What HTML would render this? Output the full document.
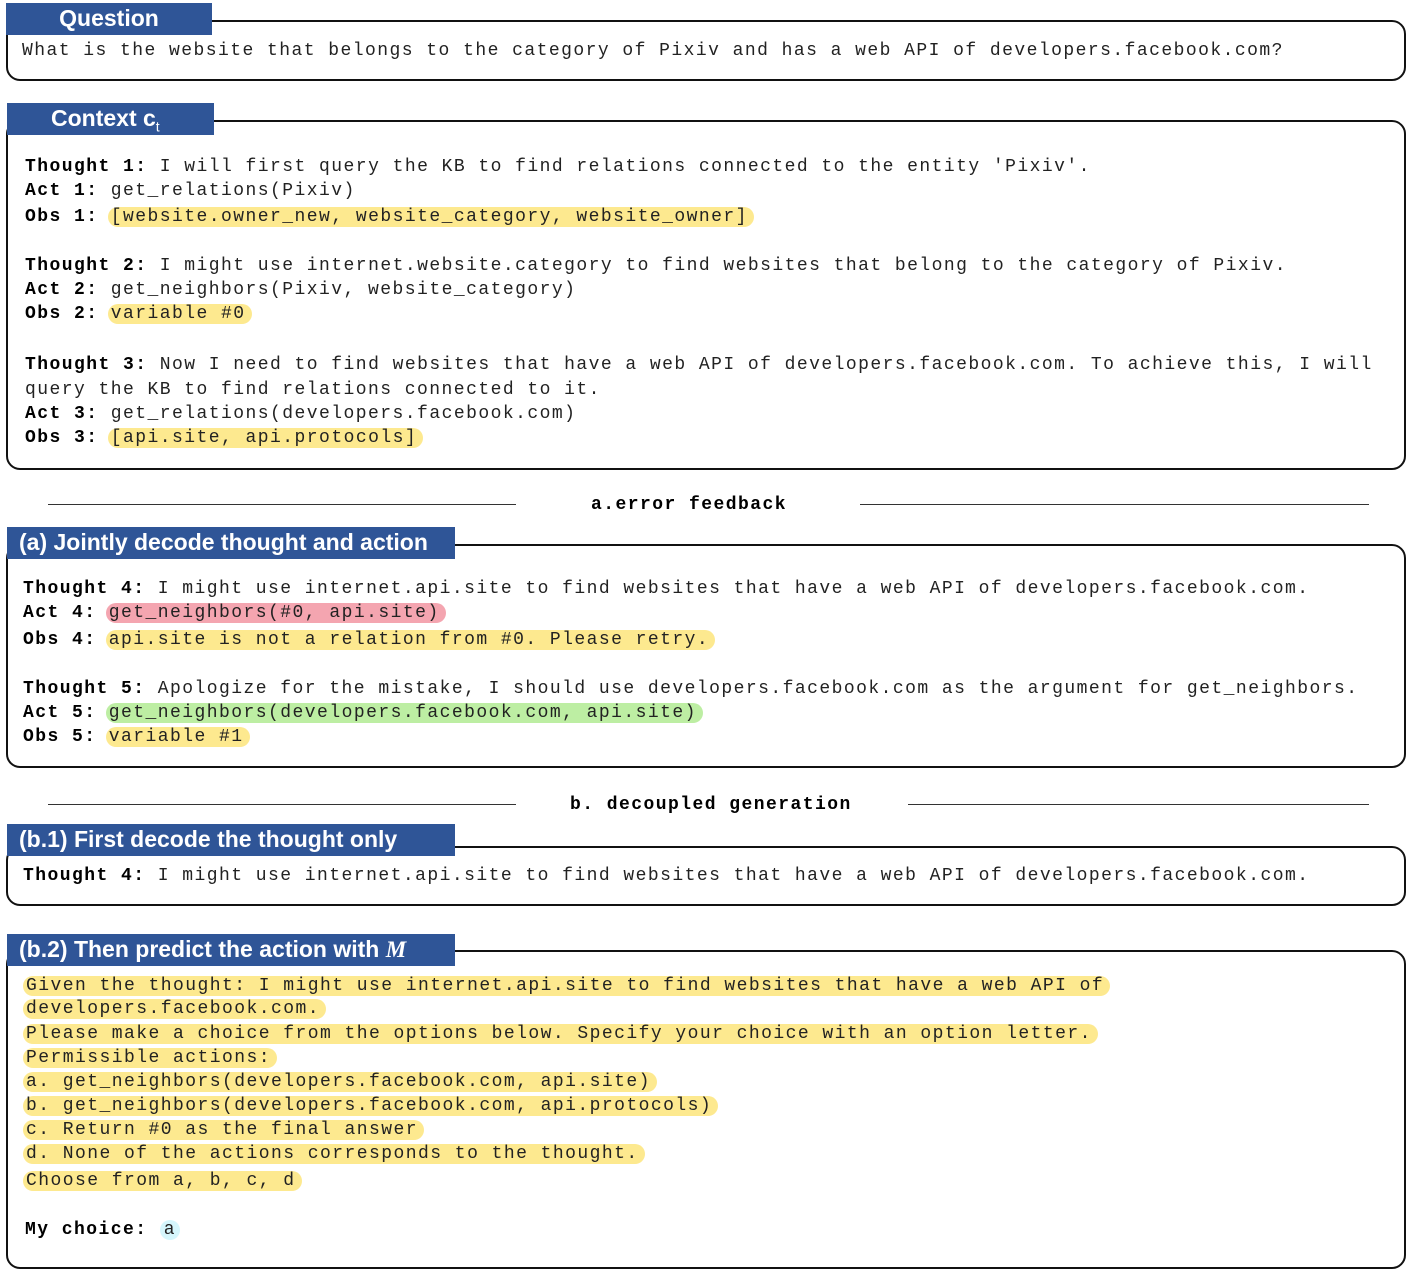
<!DOCTYPE html>
<html><head><meta charset="utf-8"><style>
body{margin:0;width:1411px;height:1274px;background:#fff;position:relative;overflow:hidden;font-family:"Liberation Mono",monospace}
.box{position:absolute;border:2px solid #111;border-radius:14px;box-sizing:border-box}
.hd{position:absolute;background:#2f5597;color:#fff;font:bold 23px "Liberation Sans",sans-serif;line-height:30px;height:32px;box-sizing:border-box;white-space:nowrap}
.l{position:absolute;white-space:pre;font-size:18px;letter-spacing:1.45px;line-height:22px;color:#222;margin-top:1px}
b{color:#000}
.y{background:#fde98f;border-radius:10px;padding:0 6px 0 3px;margin-left:-3px}
.r{background:#f4a5b0;border-radius:10px;padding:0 6px 0 3px;margin-left:-3px}
.g{background:#bdeea3;border-radius:10px;padding:0 6px 0 3px;margin-left:-3px}
.c{background:#d5f6fc;border-radius:10px;padding:0 4px}
.rule{position:absolute;height:2px;background:#333}
</style></head><body>

<div class="box" style="left:6px;top:20px;width:1400px;height:61px"></div>
<div class="hd" style="left:6px;top:3px;width:206px;text-align:center">Question</div>
<div class="l" style="left:22px;top:39px">What is the website that belongs to the category of Pixiv and has a web API of developers.facebook.com?</div>

<div class="box" style="left:6px;top:120px;width:1400px;height:350px"></div>
<div class="hd" style="left:7px;top:103px;width:207px;padding-left:44px">Context <span style="font-size:23px">c<sub style="font-size:14px;font-weight:normal">t</sub></span></div>
<div class="l" style="left:25px;top:155px"><b>Thought 1:</b> I will first query the KB to find relations connected to the entity 'Pixiv'.</div>
<div class="l" style="left:25px;top:179px"><b>Act 1:</b> get_relations(Pixiv)</div>
<div class="l" style="left:25px;top:205px"><b>Obs 1:</b> <span class="y">[website.owner_new, website_category, website_owner]</span></div>
<div class="l" style="left:25px;top:254px"><b>Thought 2:</b> I might use internet.website.category to find websites that belong to the category of Pixiv.</div>
<div class="l" style="left:25px;top:278px"><b>Act 2:</b> get_neighbors(Pixiv, website_category)</div>
<div class="l" style="left:25px;top:302px"><b>Obs 2:</b> <span class="y">variable #0</span></div>
<div class="l" style="left:25px;top:353px"><b>Thought 3:</b> Now I need to find websites that have a web API of developers.facebook.com. To achieve this, I will</div>
<div class="l" style="left:25px;top:378px">query the KB to find relations connected to it.</div>
<div class="l" style="left:25px;top:402px"><b>Act 3:</b> get_relations(developers.facebook.com)</div>
<div class="l" style="left:25px;top:426px"><b>Obs 3:</b> <span class="y">[api.site, api.protocols]</span></div>

<div class="rule" style="left:48px;top:504px;width:468px;height:1px"></div>
<div class="rule" style="left:860px;top:504px;width:509px;height:1px"></div>
<div class="l" style="left:591px;top:493px"><b>a.error feedback</b></div>

<div class="box" style="left:6px;top:544px;width:1400px;height:224px"></div>
<div class="hd" style="left:7px;top:527px;width:448px;padding-left:12px">(a) Jointly decode thought and action</div>
<div class="l" style="left:23px;top:577px"><b>Thought 4:</b> I might use internet.api.site to find websites that have a web API of developers.facebook.com.</div>
<div class="l" style="left:23px;top:601px"><b>Act 4:</b> <span class="r">get_neighbors(#0, api.site)</span></div>
<div class="l" style="left:23px;top:628px"><b>Obs 4:</b> <span class="y">api.site is not a relation from #0. Please retry.</span></div>
<div class="l" style="left:23px;top:677px"><b>Thought 5:</b> Apologize for the mistake, I should use developers.facebook.com as the argument for get_neighbors.</div>
<div class="l" style="left:23px;top:701px"><b>Act 5:</b> <span class="g">get_neighbors(developers.facebook.com, api.site)</span></div>
<div class="l" style="left:23px;top:725px"><b>Obs 5:</b> <span class="y">variable #1</span></div>

<div class="rule" style="left:48px;top:804px;width:468px;height:1px"></div>
<div class="rule" style="left:908px;top:804px;width:461px;height:1px"></div>
<div class="l" style="left:570px;top:793px"><b>b. decoupled generation</b></div>

<div class="box" style="left:6px;top:846px;width:1400px;height:60px"></div>
<div class="hd" style="left:7px;top:824px;width:448px;padding-left:12px">(b.1) First decode the thought only</div>
<div class="l" style="left:23px;top:864px"><b>Thought 4:</b> I might use internet.api.site to find websites that have a web API of developers.facebook.com.</div>

<div class="box" style="left:6px;top:950px;width:1400px;height:319px"></div>
<div class="hd" style="left:7px;top:934px;width:448px;padding-left:12px">(b.2) Then predict the action with <i style="font-family:'Liberation Serif',serif">M</i></div>
<div class="l" style="left:26px;top:974px"><span class="y">Given the thought: I might use internet.api.site to find websites that have a web API of</span></div>
<div class="l" style="left:26px;top:997px"><span class="y">developers.facebook.com.</span></div>
<div class="l" style="left:26px;top:1022px"><span class="y">Please make a choice from the options below. Specify your choice with an option letter.</span></div>
<div class="l" style="left:26px;top:1046px"><span class="y">Permissible actions:</span></div>
<div class="l" style="left:26px;top:1070px"><span class="y">a. get_neighbors(developers.facebook.com, api.site)</span></div>
<div class="l" style="left:26px;top:1094px"><span class="y">b. get_neighbors(developers.facebook.com, api.protocols)</span></div>
<div class="l" style="left:26px;top:1118px"><span class="y">c. Return #0 as the final answer</span></div>
<div class="l" style="left:26px;top:1142px"><span class="y">d. None of the actions corresponds to the thought.</span></div>
<div class="l" style="left:26px;top:1169px"><span class="y">Choose from a, b, c, d</span></div>
<div class="l" style="left:25px;top:1218px"><b>My choice:</b> <span class="c">a</span></div>

</body></html>
